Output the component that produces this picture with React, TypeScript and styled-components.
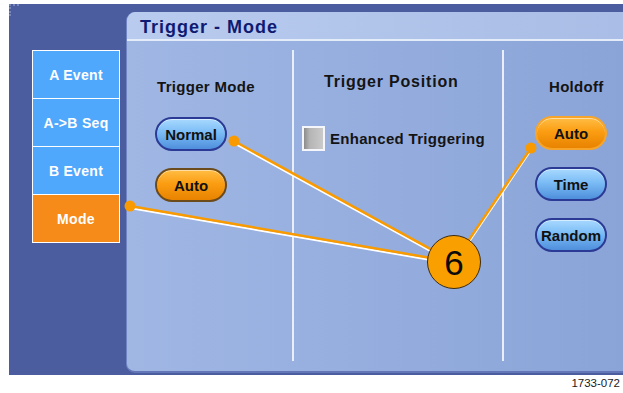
import { createGlobalStyle, styled } from "styled-components";

const GlobalStyle = createGlobalStyle`
  html, body {
    margin: 0;
    padding: 0;
    background: #ffffff;
  }
  body {
    font-family: "Liberation Sans", Arial, sans-serif;
  }
`;

const Page = styled.div`
  position: relative;
  width: 623px;
  height: 393px;
  overflow: hidden;
  background: #ffffff;
`;

const Screen = styled.div`
  position: relative;
  margin: 4px 0 0 9px;
  height: 371px;
  background: #4b5c9f;
  display: flex;
  align-items: flex-start;
`;

const CornerMark = styled.div`
  position: absolute;
  left: 0;
  top: 0;
  width: 10px;
  height: 12px;
  border-top: 2px dotted #8a99c8;
  border-left: 2px dotted #8a99c8;
  box-sizing: border-box;
  opacity: 0.7;
`;

const TabColumn = styled.div`
  display: flex;
  flex-direction: column;
  width: 88px;
  margin: 46px 6px 0 23px;
  border-top: 1px solid #ffffff;
`;

const Tab = styled.div<{ $active?: boolean }>`
  height: 47px;
  display: flex;
  align-items: center;
  justify-content: center;
  background: ${(p) => (p.$active ? "#f68b1a" : "#4fa8fb")};
  border: 1px solid #ffffff;
  border-top: none;
  color: #ffffff;
  font-weight: bold;
  font-size: 14px;
  letter-spacing: 0.3px;
`;

const Panel = styled.div`
  flex: 1;
  margin-top: 8px;
  height: 361px;
  display: flex;
  flex-direction: column;
  border-radius: 9px 0 0 9px;
  overflow: hidden;
  background: linear-gradient(to right, #a0b7e4, #8aa4d8);
  border-left: 1px solid #7185c4;
  border-bottom: 2px solid #6377b8;
  box-sizing: border-box;
`;

const TitleBar = styled.div`
  height: 29px;
  flex: none;
  display: flex;
  align-items: center;
  padding: 3px 0 0 13px;
  box-sizing: border-box;
  background: linear-gradient(to right, #b9cbee, #a9bde6);
  border-bottom: 2px solid #e4ecfa;
  color: #101a72;
  font-weight: bold;
  font-size: 18px;
  letter-spacing: 1px;
`;

const Body = styled.div`
  flex: 1;
  display: grid;
  grid-template-columns: 165px 2px 208px 2px 1fr;
`;

const Divider = styled.div`
  background: #e8eefa;
  width: 1.5px;
  margin: 9px 0 10px;
`;

const Column = styled.div<{ $padLeft: number }>`
  display: flex;
  flex-direction: column;
  padding-left: ${(p) => p.$padLeft}px;
`;

const Label = styled.div<{ $size?: number; $top: number; $indent: number }>`
  margin: ${(p) => p.$top}px 0 0 ${(p) => p.$indent}px;
  height: 18px;
  line-height: 18px;
  color: #141414;
  font-weight: bold;
  font-size: ${(p) => p.$size ?? 15}px;
  letter-spacing: ${(p) => ((p.$size ?? 15) > 15 ? 0.8 : 0.3)}px;
  white-space: nowrap;
`;

const ButtonStack = styled.div<{ $top: number }>`
  display: flex;
  flex-direction: column;
  gap: 17px;
  margin-top: ${(p) => p.$top}px;
`;

const Pill = styled.div<{ $orange?: boolean; $soft?: boolean }>`
  width: 72px;
  height: 34px;
  box-sizing: border-box;
  border-radius: 17px;
  display: flex;
  align-items: center;
  justify-content: center;
  font-weight: bold;
  font-size: 15px;
  color: #111111;
  background: ${(p) =>
    p.$orange
      ? "linear-gradient(to bottom, #ffbd45 0%, #fb9d12 45%, #e88300 100%)"
      : "linear-gradient(to bottom, #a8d9ff 0%, #7bbcf5 45%, #4f8fdc 100%)"};
  border: 2px solid
    ${(p) => (p.$orange ? (p.$soft ? "#f6a52a" : "#6b4a1c") : "#2b3a94")};
  box-shadow: inset 0 1px 0 rgba(255, 255, 255, 0.5);
`;

const CheckRow = styled.div`
  display: flex;
  align-items: center;
  gap: 5px;
  margin: 35px 0 0 8px;
`;

const CheckBox = styled.div`
  width: 23px;
  height: 25px;
  box-sizing: border-box;
  border: 2px solid #f4f6fb;
  background: linear-gradient(to right, #8c8c8c 0%, #b5b5b5 30%, #cacaca 100%);
`;

const Overlay = styled.svg`
  position: absolute;
  left: 0;
  top: 0;
  pointer-events: none;
`;

const Callout = styled.div`
  position: absolute;
  left: 427px;
  top: 235px;
  width: 54px;
  height: 54px;
  box-sizing: border-box;
  border-radius: 50%;
  background: #f9a000;
  border: 1.5px solid #3a2a10;
  display: flex;
  align-items: center;
  justify-content: center;
  color: #0a0a0a;
  font-size: 35px;
  line-height: 1;
`;

const Caption = styled.div`
  text-align: right;
  padding-right: 3px;
  margin-top: 2px;
  font-size: 11.5px;
  color: #1a1a1a;
`;

const leaders = [
  { x: 130, y: 206 },
  { x: 234, y: 141 },
  { x: 531, y: 148 },
];
const hub = { x: 454, y: 262 };

export default function App() {
  return (
    <Page>
      <GlobalStyle />
      <Screen>
        <CornerMark />
        <TabColumn>
          <Tab>A Event</Tab>
          <Tab>A-&gt;B Seq</Tab>
          <Tab>B Event</Tab>
          <Tab $active>Mode</Tab>
        </TabColumn>
        <Panel>
          <TitleBar>Trigger - Mode</TitleBar>
          <Body>
            <Column $padLeft={28}>
              <Label $top={37} $indent={2}>
                Trigger Mode
              </Label>
              <ButtonStack $top={21}>
                <Pill>Normal</Pill>
                <Pill $orange>Auto</Pill>
              </ButtonStack>
            </Column>
            <Divider />
            <Column $padLeft={0}>
              <Label $size={16} $top={32} $indent={30}>
                Trigger Position
              </Label>
              <CheckRow>
                <CheckBox />
                <Label $top={0} $indent={0}>
                  Enhanced Triggering
                </Label>
              </CheckRow>
            </Column>
            <Divider />
            <Column $padLeft={31}>
              <Label $top={37} $indent={14}>
                Holdoff
              </Label>
              <ButtonStack $top={20}>
                <Pill $orange $soft>
                  Auto
                </Pill>
                <Pill>Time</Pill>
                <Pill>Random</Pill>
              </ButtonStack>
            </Column>
          </Body>
        </Panel>
      </Screen>
      <Caption>1733-072</Caption>
      <Overlay width={623} height={393}>
        {leaders.map((p, i) => (
          <g key={i}>
            <line
              x1={p.x}
              y1={p.y + 2}
              x2={hub.x}
              y2={hub.y + 2}
              stroke="#ffffff"
              strokeWidth={2}
            />
            <line
              x1={p.x}
              y1={p.y}
              x2={hub.x}
              y2={hub.y}
              stroke="#f99b00"
              strokeWidth={2.5}
            />
            <circle cx={p.x} cy={p.y} r={5.5} fill="#f99b00" />
          </g>
        ))}
      </Overlay>
      <Callout>6</Callout>
    </Page>
  );
}
